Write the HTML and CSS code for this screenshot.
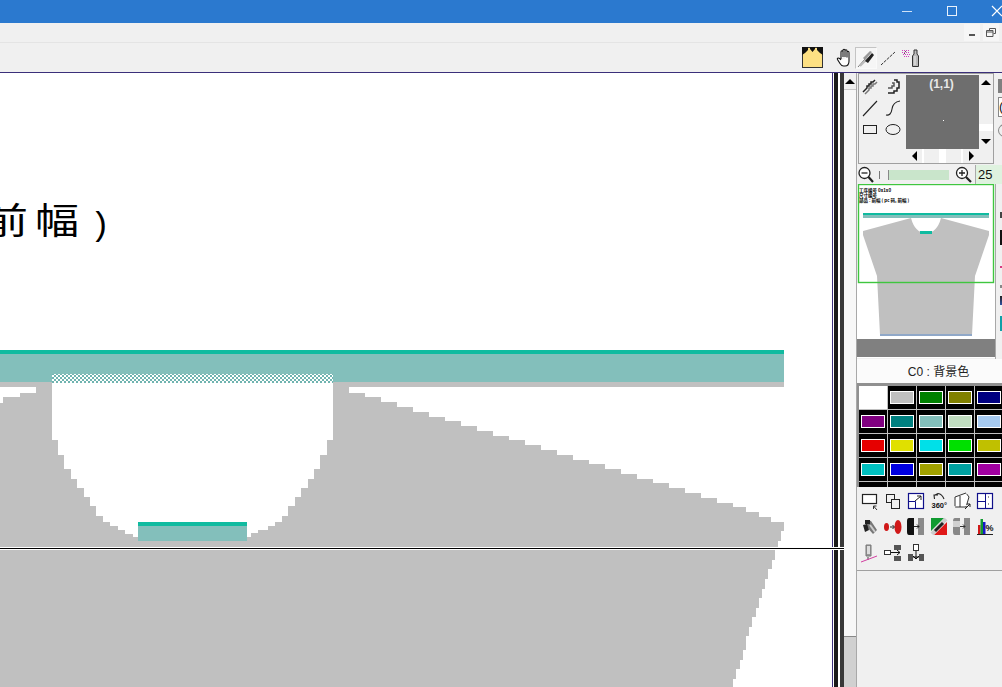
FILE: index.html
```html
<!DOCTYPE html>
<html lang="zh">
<head>
<meta charset="utf-8">
<title>Knit design</title>
<link rel="stylesheet" href="styles.css">
</head>
<body>
<div class="app">
  <header class="titlebar">
    <svg class="win-icon" width="14" height="14" viewBox="0 0 14 14"><path d="M2 7.500H12" stroke="#cfe2f7"/></svg>
    <svg class="win-icon" width="14" height="14" viewBox="0 0 14 14"><rect x="2.500" y="2.500" width="9" height="9" fill="none" stroke="#e8f1fb"/></svg>
    <svg class="win-icon" width="14" height="14" viewBox="0 0 14 14"><path d="M2 2L12 12M12 2L2 12" stroke="#fff" stroke-width="1.200"/></svg>
  </header>
  <div class="menubar">
    <span class="mdi-btn"><svg width="8" height="8" viewBox="0 0 8 8"><rect x="1" y="5" width="6" height="2" fill="#555"/></svg></span>
    <span class="mdi-btn"><svg width="10" height="10" viewBox="0 0 10 10"><path d="M3.500 2.500V0.500H9.500V5.500H7.500M0.500 2.500H7V8.500H0.500ZM0.500 4H7" fill="none" stroke="#555"/></svg></span>
  </div>
  <div class="toolbar">
    <svg class="tool-shirt" width="21" height="21" viewBox="0 0 21 21"><rect x="0.500" y="0.500" width="20" height="20" fill="#fde083" stroke="#333"/><path d="M0 0H6V3L3 6L0 8ZM21 0H15V3L18 6L21 8ZM8 0H13V2L10.500 5L8 2Z" fill="#111"/></svg>
    <span class="tool-btn"><svg width="18" height="20" viewBox="0 0 18 20"><path d="M6 11V4Q6 2.800 7 2.800T8 4V9M8 9V2.500Q8 1.300 9 1.300T10 2.500V9M10 9V3Q10 1.800 11 1.800T12 3V9.500M12 9.500V4.500Q12 3.300 13 3.300T14 4.500V13Q14 18 10 18H8.500Q6.500 18 5 15.500L2.500 11.500Q2 10 3.300 10T6 12" fill="#fff" stroke="#111" stroke-width="1.100"/></svg></span>
    <span class="tool-btn is-active"><svg width="20" height="20" viewBox="0 0 20 20"><path d="M2 19L9 11" stroke="#777"/><path d="M4 18L12 10" stroke="#bbb" stroke-width="2"/><path d="M9 13L16 5L18 7L12 15Z" fill="#222"/><path d="M7 10L14 3L16 4L9 12Z" fill="#999"/></svg></span>
    <span class="tool-btn"><svg width="18" height="18" viewBox="0 0 18 18"><path d="M2 16L16 3" stroke="#333" stroke-dasharray="3 1"/></svg></span>
    <span class="tool-btn"><svg width="20" height="20" viewBox="0 0 20 20"><path d="M2 2.500H10M2 4.500H10M3 6.500H10M4 8.500H9" stroke="#d23fc0" stroke-dasharray="1 1"/><path d="M5 3.500H9M4 5.500H8" stroke="#555" stroke-dasharray="1 3"/><path d="M12.500 8L14 6V2H17V6L18.500 8V18.500H12.500Z" fill="#bbb" stroke="#333"/><path d="M15 8V17" stroke="#eee"/></svg></span>
  </div>
  <main class="workspace">
    <div class="stage">
      <div class="canvas">
        <svg class="drawing" width="832" height="614" viewBox="0 73 832 614" shape-rendering="crispEdges">
          <defs>
            <pattern id="check" width="4" height="4" patternUnits="userSpaceOnUse" x="52" y="373">
              <rect width="4" height="4" fill="#fff"/>
              <rect width="2" height="2" fill="#70b4b0"/>
              <rect x="2" y="2" width="2" height="2" fill="#70b4b0"/>
            </pattern>
          </defs>
          <text class="big-text" transform="translate(-16 234) scale(1.100 0.900)">前</text>
          <text class="big-text" transform="translate(35 234) scale(1.100 0.900)">幅</text>
          <text class="big-text paren" x="90" y="235">)</text>
          <path fill="#c0c0c0" d="M0 687V403H3V397H20V393H36V382H349V393H365V397H381V402H397V407H413V412H429V417H445V421H461V426H477V431H493V436H509V440H525V445H541V450H557V455H573V460H589V464H605V469H621V474H637V479H653V483H669V488H685V493H701V498H717V503H733V507H746V512H759V517H771V522H784V531H781V541H778V548H775V560H772V569H768V579H765V589H762V598H759V608H756V617H752V627H749V636H746V650H743V660H740V669H736V679H733V687Z"/>
          <rect x="0" y="382" width="784" height="5" fill="#c0c0c0"/>
          <rect x="0" y="350" width="784" height="4" fill="#10bba0"/>
          <rect x="0" y="354" width="784" height="28" fill="#83bfbb"/>
          <path fill="#fff" d="M52 383V440H58V455H64V469H71V479H77V488H84V497H90V506H96V516H103V522H110V526H118V530H125V534H133V537H138V541H247V537H251V533H258V530H268V526H275V522H282V516H288V506H295V497H301V488H308V479H314V469H320V455H327V440H333V383Z"/>
          <rect x="52" y="374" width="281" height="9" fill="url(#check)"/>
          <rect x="138" y="522" width="109" height="4" fill="#10bba0"/>
          <rect x="138" y="526" width="109" height="15" fill="#83bfbb"/>
        </svg>
      </div>
      <div class="splitter"><i class="sp-a"></i><i class="sp-b"></i><i class="sp-c"></i><i class="sp-d"></i><i class="sp-e"></i></div>
      <div class="crosshair"></div>
    </div>
    <div class="vscroll">
      <span class="sb-btn"><i class="tri tri-up"></i></span>
      <span class="vscroll-track"></span>
      <span class="vscroll-rest"></span>
    </div>
    <aside class="side">
      <div class="topbox">
        <div class="tools">
          <svg width="20" height="20" viewBox="0 0 20 20"><path d="M3 15L7 11V9H9V7H11V5H13L15 3" fill="none" stroke="#222" stroke-width="1.500"/><path d="M5 17L9 13V11H11V9H13V7H15L17 5" fill="none" stroke="#777" stroke-width="1.500"/></svg>
          <svg width="20" height="20" viewBox="0 0 20 20"><path d="M11 3H14V5H16V11H14V14H11V16H5" fill="none" stroke="#222" stroke-width="1.500"/><path d="M9 6H11V9H9V11H5" fill="none" stroke="#555" stroke-width="1.500"/></svg>
          <svg width="20" height="20" viewBox="0 0 20 20"><path d="M3 18L17 3" stroke="#222" stroke-width="1.100"/></svg>
          <svg width="20" height="20" viewBox="0 0 20 20"><path d="M3 17Q8 18 9 11T17 3" fill="none" stroke="#222" stroke-width="1.100"/></svg>
          <svg width="20" height="20" viewBox="0 0 20 20"><rect x="3.500" y="5.500" width="13" height="8" fill="#f0f0f0" stroke="#222"/></svg>
          <svg width="20" height="20" viewBox="0 0 20 20"><ellipse cx="10" cy="9.500" rx="7" ry="5" fill="#f0f0f0" stroke="#222"/></svg>
        </div>
        <div class="preview-wrap">
          <div class="preview-row">
            <div class="preview"><span class="coord">(1,1)</span><i class="dot"></i></div>
            <div class="pv-vbar">
              <span class="sb-btn tall"><i class="tri tri-up"></i></span>
              <span class="pv-track"></span>
              <span class="pv-thumb"></span>
              <span class="pv-track short"></span>
              <span class="sb-btn tall"><i class="tri tri-down"></i></span>
            </div>
          </div>
          <div class="pv-hbar">
            <span class="sb-btn wide left"><i class="tri tri-left"></i></span>
            <span class="pv-htrack"></span>
            <span class="pv-hthumb"></span>
            <span class="pv-htrack"></span>
            <span class="sb-btn wide right"><i class="tri tri-right"></i></span>
          </div>
        </div>
        <div class="extras">
          <i class="ex-dark"></i>
          <i class="ex-box">(</i>
          <i class="ex-round"></i>
        </div>
      </div>
      <div class="zoomrow">
        <svg width="18" height="18" viewBox="0 0 18 18"><circle cx="7.500" cy="7" r="5.500" fill="#fff" stroke="#222" stroke-width="1.300"/><path d="M4.500 7H10.500" stroke="#222" stroke-width="1.300"/><path d="M11.500 11L16 16" stroke="#222" stroke-width="2.200"/></svg>
        <i class="tick"></i>
        <span class="slider"></span>
        <svg width="18" height="18" viewBox="0 0 18 18"><circle cx="7" cy="7" r="5.500" fill="#fff" stroke="#222" stroke-width="1.300"/><path d="M4 7H10M7 4V10" stroke="#222" stroke-width="1.300"/><path d="M11 11L16 16" stroke="#222" stroke-width="2.200"/></svg>
        <span class="zoomval">25</span>
      </div>
      <div class="thumb-row">
        <div class="thumb">
          <svg class="thumb-art" width="138" height="174" viewBox="857 185 138 174">
            <rect x="857" y="185" width="138" height="174" fill="#fff"/>
            <text class="mini" x="859" y="192.500">工序编号 0x1x0</text>
            <text class="mini" x="859" y="197.500">尺寸编号</text>
            <text class="mini" x="859" y="202.500">部品 : 前幅 ( pc 码, 前幅 )</text>
            <path fill="#c0c0c0" d="M863 232L911 219Q915 234 926 234Q937 234 941 219L989 232L989 236L975 277L972 336H880L877 277L863 236Z"/>
            <rect x="863" y="214" width="126" height="2" fill="#10bba0"/>
            <rect x="863" y="216" width="126" height="3" fill="#83bfbb"/>
            <rect x="920" y="232" width="12" height="3" fill="#10bba0"/>
            <rect x="880" y="335" width="92" height="2" fill="#90a8c8"/>
            <rect x="857" y="340" width="138" height="18" fill="#808080"/>
            <rect x="858.500" y="185.500" width="135" height="98" fill="none" stroke="#3fc63f" stroke-width="1.400"/>
          </svg>
        </div>
        <div class="thumb-extras">
          <i class="tx-a"></i><i class="tx-b"></i><i class="tx-c"></i><i class="tx-d"></i><i class="tx-e"></i><i class="tx-f"></i>
        </div>
      </div>
      <div class="color-label">C0 : 背景色</div>
      <div class="palette">
        <span class="cell is-white"></span>
        <span class="cell"><b class="c1"></b></span>
        <span class="cell"><b class="c2"></b></span>
        <span class="cell"><b class="c3"></b></span>
        <span class="cell"><b class="c4"></b></span>
        <span class="cell"><b class="c5"></b></span>
        <span class="cell"><b class="c6"></b></span>
        <span class="cell"><b class="c7"></b></span>
        <span class="cell"><b class="c8"></b></span>
        <span class="cell"><b class="c9"></b></span>
        <span class="cell"><b class="c10"></b></span>
        <span class="cell"><b class="c11"></b></span>
        <span class="cell"><b class="c12"></b></span>
        <span class="cell"><b class="c13"></b></span>
        <span class="cell"><b class="c14"></b></span>
        <span class="cell"><b class="c15"></b></span>
        <span class="cell"><b class="c16"></b></span>
        <span class="cell"><b class="c17"></b></span>
        <span class="cell"><b class="c18"></b></span>
        <span class="cell"><b class="c19"></b></span>
        <span class="cell stub"></span><span class="cell stub"></span><span class="cell stub"></span><span class="cell stub"></span><span class="cell stub"></span>
      </div>
      <div class="commands">
        <svg viewBox="0 0 20 20" width="20" height="20"><rect x="2.500" y="3.500" width="14" height="9" fill="#fff" stroke="#222" stroke-width="1.200"/><path d="M13.500 15H16.500M13.500 15V18M13.500 15L17 19" fill="none" stroke="#333"/></svg>
        <svg viewBox="0 0 20 20" width="20" height="20"><rect x="3.500" y="3.500" width="8" height="8" fill="#f0f0f0" stroke="#222"/><rect x="8.500" y="8.500" width="8" height="9" fill="#f0f0f0" stroke="#222"/></svg>
        <svg viewBox="0 0 20 20" width="20" height="20"><rect x="2.500" y="2.500" width="15" height="15" fill="#fff" stroke="#10108a" stroke-width="1.200"/><path d="M2.500 10.500H9.500V17.500" fill="none" stroke="#10108a"/><path d="M9 10L15 5M11 5H15V9" fill="none" stroke="#222"/></svg>
        <svg viewBox="0 0 20 20" width="20" height="20"><path d="M5.500 8L5 4H9M5 4.500L9 2.500Q13 3 15 8" fill="none" stroke="#222" stroke-width="1.100"/><text class="deg" x="2.500" y="17">360°</text></svg>
        <svg viewBox="0 0 20 20" width="20" height="20"><path d="M3 6L14 2L17 6L14 16H3Z" fill="#fff" stroke="#333" stroke-dasharray="12 1"/><path d="M8 5V16" stroke="#333"/><path d="M13 18L18 13M15 13H18V16" fill="none" stroke="#222"/></svg>
        <svg viewBox="0 0 20 20" width="20" height="20"><rect x="2.500" y="2.500" width="15" height="15" fill="#fff" stroke="#10108a" stroke-width="1.200"/><path d="M10.500 3V17M3 10.500H10" stroke="#10108a"/><path d="M13 6H14M13 13H14" stroke="#333"/></svg>
        <svg viewBox="0 0 20 20" width="20" height="20"><rect x="4" y="2" width="6" height="16" fill="#1c9b1c"/></svg>

        <svg viewBox="0 0 20 20" width="20" height="20"><path d="M6 3L11 4L17 13L13 17L6 9Z" fill="#777"/><path d="M5 3H10V7H5ZM3 8L7 7L9 13L5 15Z" fill="#222"/><path d="M10 8L15 15" stroke="#ccc" stroke-width="2"/></svg>
        <svg viewBox="0 0 20 20" width="20" height="20"><ellipse cx="3.500" cy="10" rx="2.500" ry="4" fill="#d01818"/><ellipse cx="15" cy="10" rx="3.500" ry="7" fill="#d01818"/><path d="M7 10H11M9.500 8L11.500 10L9.500 12" fill="none" stroke="#222"/></svg>
        <svg viewBox="0 0 20 20" width="20" height="20"><path d="M3 1H8V18H3Q1 18 1 15V4Q1 1 3 1Z" fill="#111"/><rect x="12" y="1" width="6" height="17" fill="#8a8a8a"/><path d="M8 9.500H13M11 7.500L13 9.500L11 11.500" fill="none" stroke="#222"/></svg>
        <svg viewBox="0 0 20 20" width="20" height="20"><path d="M2 1H15L2 14Z" fill="#109a30"/><path d="M18 18H5L18 5Z" fill="#e01818"/><path d="M3 17L17 2" stroke="#ccc" stroke-width="4"/><path d="M6 14L14 6" stroke="#222" stroke-width="3"/></svg>
        <svg viewBox="0 0 20 20" width="20" height="20"><path d="M3 1H8V18H3Q1 18 1 15V4Q1 1 3 1Z" fill="#888"/><rect x="1" y="4" width="7" height="6" fill="#d0d0d0"/><rect x="12" y="1" width="6" height="17" fill="#8a8a8a"/><path d="M8 9.500H13M11 7.500L13 9.500L11 11.500" fill="none" stroke="#333"/></svg>
        <svg viewBox="0 0 20 20" width="20" height="20"><rect x="3" y="8" width="2.500" height="9" fill="#d01818"/><rect x="5.500" y="2" width="2.500" height="15" fill="#109a30"/><rect x="8" y="5" width="2.500" height="12" fill="#1818c8"/><path d="M2 17.500H18" stroke="#222"/><text class="pct" x="10.500" y="14">%</text></svg>
        <svg viewBox="0 0 20 20" width="20" height="20"><rect x="4" y="6" width="6" height="10" fill="#777"/></svg>

        <svg viewBox="0 0 20 20" width="20" height="20"><path d="M6 2H11V13H6Z" fill="#999" stroke="#777"/><path d="M7 3H10V11H7Z" fill="#ddd"/><path d="M8 14V17" stroke="#999" stroke-width="2"/><path d="M1 19L17 13" stroke="#d23fa0"/></svg>
        <svg viewBox="0 0 20 20" width="20" height="20"><rect x="1.500" y="7.500" width="6" height="4" fill="#fff" stroke="#333"/><rect x="11" y="2" width="7" height="5" fill="#555"/><rect x="11" y="13" width="7" height="5" fill="#555"/><path d="M8 9.500H17M14 7L17 9.500L14 12" fill="none" stroke="#111"/></svg>
        <svg viewBox="0 0 20 20" width="20" height="20"><rect x="7.500" y="1.500" width="5" height="6" fill="#fff" stroke="#333"/><rect x="2" y="11" width="5" height="7" fill="#555"/><rect x="13" y="11" width="5" height="7" fill="#555"/><path d="M10 8V16M7 13L10 16L13 13M7 14H13" fill="none" stroke="#111"/></svg>
      </div>
      <div class="side-rest"></div>
    </aside>
  </main>
</div>
</body>
</html>
```
FILE: styles.css
```css
* { box-sizing: border-box; }
html, body { margin: 0; height: 100%; overflow: hidden; }
body { font-family: "Liberation Sans", "Noto Sans CJK SC", sans-serif; background: #f0f0f0; color: #111; }
i, b { display: block; font-style: normal; }

.app { width: 1002px; height: 687px; display: flex; flex-direction: column; overflow: hidden; }

.titlebar { flex: none; height: 23px; background: #2b79cf; display: flex; justify-content: flex-end; align-items: center; gap: 31px; margin-right: -2px; padding-bottom: 2px; }
.win-icon { flex: none; }

.menubar { flex: none; height: 20px; background: #f0f0f0; border-bottom: 1px solid #e4e4e4; display: flex; justify-content: flex-end; align-items: center; gap: 3px; padding-right: 3px; }
.mdi-btn { width: 16px; height: 17px; background: #f6f6f6; display: flex; align-items: center; justify-content: center; }

.toolbar { flex: none; height: 30px; background: #f0f0f0; border-bottom: 1px solid #3b2f7a; display: flex; justify-content: flex-end; align-items: center; padding-right: 81px; }
.tool-shirt { margin-right: 10px; }
.tool-btn { width: 22px; height: 22px; display: flex; align-items: center; justify-content: center; border: 1px solid transparent; }
.tool-btn.is-active { border-color: #c4c4c4 #fafafa #fafafa #c4c4c4; background: #f6f6f6; }

.workspace { flex: 1; min-height: 0; display: flex; }
.stage { position: relative; flex: none; width: 844px; display: flex; }
.canvas { flex: none; width: 832px; background: #fff; overflow: hidden; }
.drawing { display: block; }
.big-text { font-family: "Noto Sans CJK SC", sans-serif; font-size: 40px; font-weight: 400; fill: #000; }
.big-text.paren { font-family: "Liberation Mono", monospace; font-size: 34px; font-weight: 400; }

.splitter { flex: none; width: 12px; display: flex; }
.sp-a { width: 1px; background: #3b2f7a; }
.sp-b { width: 1px; background: #fff; }
.sp-c { width: 4px; background: #1a1a1a; }
.sp-d { width: 2px; background: #fff; }
.sp-e { width: 4px; background: #383838; }

.crosshair { position: absolute; left: 0; top: 474px; width: 844px; height: 3px; background: #000; border-top: 1px solid #fff; border-bottom: 1px solid #fff; }

.vscroll { flex: none; width: 12px; display: flex; flex-direction: column; background: #f4f4f4; }
.vscroll .sb-btn { height: 17px; border-bottom: 1px solid #c8c8c8; padding-right: 1px; }
.vscroll-track { height: 547px; background: #f7f7f7; border-bottom: 1px solid #888; }
.vscroll-rest { flex: 1; background: #d0d0d0; }

.sb-btn { flex: none; display: flex; align-items: center; justify-content: center; background: #f0f0f0; }
.tri { width: 0; height: 0; border-style: solid; border-color: transparent; }
.tri-up { border-width: 0 5px 5px; border-bottom-color: #000; }
.tri-down { border-width: 5px 5px 0; border-top-color: #000; }
.tri-left { border-width: 5px 5px 5px 0; border-right-color: #000; }
.tri-right { border-width: 5px 0 5px 5px; border-left-color: #000; }

.side { flex: none; width: 146px; display: flex; flex-direction: column; background: #f0f0f0; border-left: 1px solid #a8a8a8; }

.topbox { flex: none; height: 92px; display: flex; padding-left: 1px; }
.tools { flex: none; width: 48px; height: 91px; border: 1px solid #a0a0a0; border-right: 0; display: grid; grid-template-columns: 22px 23px; grid-auto-rows: 21.500px; align-content: start; padding-top: 2px; justify-items: center; align-items: center; }
.preview-wrap { flex: none; width: 88px; height: 91px; border-top: 1px solid #a0a0a0; border-bottom: 1px solid #a0a0a0; border-right: 1px solid #a0a0a0; display: flex; flex-direction: column; padding-top: 1px; }
.preview-row { display: flex; height: 74px; }
.preview { flex: none; width: 73px; background: #6e6e6e; display: flex; flex-direction: column; align-items: center; }
.coord { color: #e8e8e8; font-weight: 700; font-size: 12px; line-height: 14px; margin-top: 2px; margin-right: 2px; }
.dot { width: 1px; height: 1px; background: #fff; margin-top: 29px; margin-left: 1px; }
.pv-vbar { flex: none; width: 14px; display: flex; flex-direction: column; }
.sb-btn.tall { height: 15px; }
.pv-track { flex: 1; background: #f0f0f0; }
.pv-track.short { flex: none; height: 3px; }
.pv-thumb { flex: none; height: 7px; background: #fff; }
.pv-hbar { display: flex; height: 14px; width: 73px; }
.sb-btn.wide { width: 18px; }
.sb-btn.wide.left { border-right: 2px solid #fff; }
.sb-btn.wide.right { border-left: 2px solid #fff; }
.pv-htrack { flex: 1; background: #f0f0f0; }
.pv-hthumb { flex: none; width: 7px; background: #fff; }
.extras { flex: none; width: 10px; padding: 6px 0 0 4px; display: flex; flex-direction: column; gap: 4px; }
.ex-dark { width: 10px; height: 14px; background: #808080; }
.ex-box { width: 14px; height: 20px; border: 1px solid #888; font-size: 13px; line-height: 18px; background: #fff; }
.ex-round { width: 14px; height: 13px; border: 1px solid #888; border-radius: 50%; margin-top: 3px; }

.zoomrow { flex: none; height: 19px; display: flex; align-items: center; }
.tick { flex: none; width: 1px; height: 8px; background: #777; margin-left: 4px; }
.slider { flex: none; width: 61px; height: 10px; margin: 0 6px 0 8px; background: #c9e5cb; border-left: 1px solid #888; }
.zoomval { flex: 1; height: 19px; background: #dff2df; font-size: 13px; line-height: 20px; padding-left: 2px; margin-left: 2px; border-left: 1px solid #aaa; }

.thumb-row { flex: none; height: 175px; display: flex; }
.thumb { flex: none; width: 139px; height: 175px; background: #f0f0f0; border-right: 1px solid #a8a8a8; }
.thumb-art { display: block; }
.mini { font-size: 4.500px; font-weight: 700; fill: #000; font-family: "Noto Sans CJK SC", sans-serif; }
.thumb-extras { flex: 1; display: flex; flex-direction: column; padding: 28px 0 0 4px; }
.tx-a { width: 3px; height: 6px; background: #444; }
.tx-b { width: 3px; height: 15px; margin-top: 12px; background: #111; }
.tx-c { width: 3px; height: 2px; margin-top: 21px; background: #d83a80; }
.tx-d { width: 3px; height: 3px; margin-top: 17px; background: #888; }
.tx-e { width: 3px; height: 9px; margin-top: 8px; background: linear-gradient(#222, #3050a0); }
.tx-f { width: 3px; height: 15px; margin-top: 11px; background: #10a0a8; }

.color-label { flex: none; height: 24px; background: #fbfbfb; text-align: center; font-size: 12px; line-height: 27px; padding-left: 18px; color: #222; }

.palette { flex: none; height: 104px; border-top: 3px solid #909090; border-left: 2px solid #909090; background: #c0c0c0; display: grid; grid-template-columns: repeat(5, 28px); grid-auto-rows: 23px; gap: 1px; overflow: hidden; }
.cell { background: #000; display: flex; align-items: flex-start; justify-content: center; padding-top: 5px; }
.cell.is-white { background: #fff; }
.cell b { width: 24px; height: 13px; border: 1px solid #fff; }
.c1 { background: #c0c0c0; } .c2 { background: #008000; } .c3 { background: #808000; } .c4 { background: #000080; }
.c5 { background: #800080; } .c6 { background: #008080; } .c7 { background: #83bfbb; } .c8 { background: #c0dcc0; } .c9 { background: #a6caf0; }
.c10 { background: #e60000; } .c11 { background: #e0e000; } .c12 { background: #00e0e8; } .c13 { background: #00e000; } .c14 { background: #c0c000; }
.c15 { background: #00c0c0; } .c16 { background: #0000e0; } .c17 { background: #a0a000; } .c18 { background: #00a0a0; } .c19 { background: #a000a0; }

.commands { flex: none; height: 84px; padding: 1px 0 0 1px; display: grid; grid-template-columns: repeat(7, 23px); grid-auto-rows: 26px; justify-items: center; align-items: center; border-bottom: 1px solid #a0a0a0; }
.deg { font-size: 7.500px; font-weight: 700; fill: #111; font-family: "Liberation Sans", sans-serif; }
.pct { font-size: 9px; font-weight: 700; fill: #111; font-family: "Liberation Sans", sans-serif; }
.side-rest { flex: 1; background: #f0f0f0; }
```
